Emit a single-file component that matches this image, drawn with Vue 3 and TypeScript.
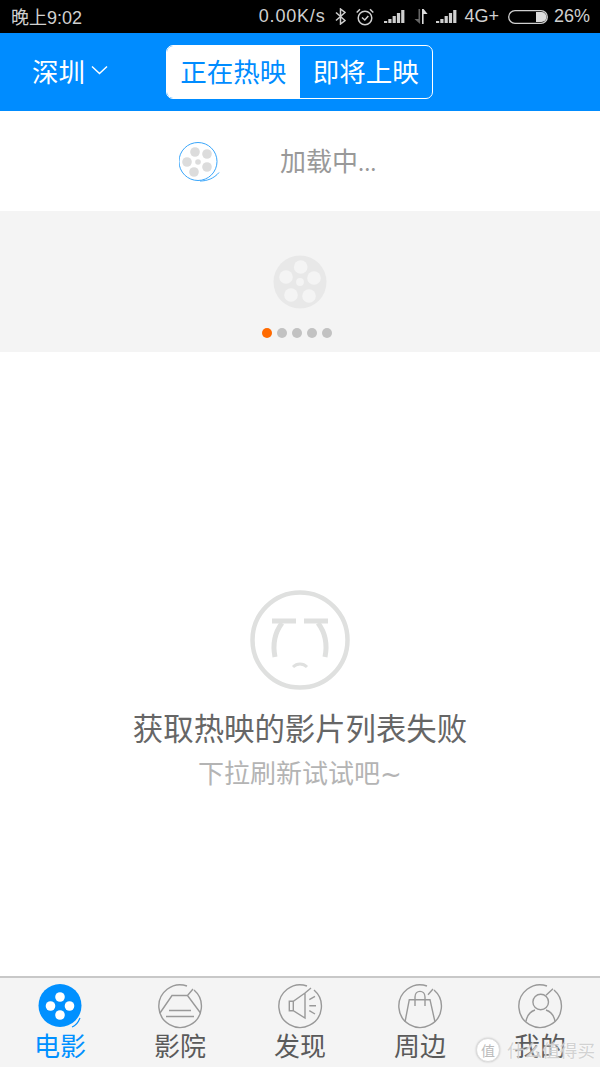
<script setup lang="ts">
const dots = [0, 1, 2, 3, 4]
const bars = [2, 4, 7, 10, 13]
const ring = "M29 2A21.3 21.3 0 1 0 36 6"
</script>

<template>
  <div class="page">
    <div class="status">
      <span class="time">晚上9:02</span>
      <div class="status-right">
        <span class="speed">0.00K/s</span>
        <svg class="bt" width="11" height="17" viewBox="0 0 11 17" fill="none" stroke="#d0d0d0" stroke-width="1.500">
          <path d="M1 4.500l9 8L5.500 16V1L10 4.500l-9 8" />
        </svg>
        <svg class="alarm" width="18" height="18" viewBox="0 0 18 18" fill="none" stroke="#d0d0d0" stroke-width="1.500">
          <circle cx="9" cy="10" r="6.800" />
          <path d="M6 9.500l2.800 2.500 3.500-4M.7 4.500L4 1.200M17.300 4.500L14 1.200" />
        </svg>
        <svg class="signal" width="21" height="13" viewBox="0 0 21 13">
          <rect v-for="(b, i) in bars" :key="i" :x="i * 4.3" :y="13 - b" width="3.200" :height="b" fill="#d0d0d0" />
        </svg>
        <svg class="data" width="14" height="17" viewBox="0 0 14 17">
          <path d="M4.500 1h1.600v15L.5 11h4z" fill="#666" />
          <path d="M8 1v15h1.600V6h4L9.600 1z" fill="#dcdcdc" />
        </svg>
        <svg class="signal2" width="21" height="13" viewBox="0 0 21 13">
          <rect v-for="(b, i) in bars" :key="i" :x="i * 4.3" :y="13 - b" width="3.200" :height="b" fill="#d0d0d0" />
        </svg>
        <span class="net">4G+</span>
        <svg class="battery" width="40" height="14" viewBox="0 0 40 14">
          <rect x="0.700" y="0.700" width="38.600" height="12.600" rx="6.300" fill="none" stroke="#d0d0d0" stroke-width="1.300" />
          <path d="M28 2h5.500a5 5 0 0 1 0 10H28z" fill="#dcdcdc" />
        </svg>
        <span class="pct">26%</span>
      </div>
    </div>

    <header class="nav">
      <div class="city">
        <span>深圳</span>
        <svg width="17" height="10" viewBox="0 0 17 10" fill="none" stroke="#fff" stroke-width="1.500">
          <path d="M1 1.500l7.500 7 7.500-7" />
        </svg>
      </div>
      <div class="segment">
        <div class="seg seg-on">正在热映</div>
        <div class="seg">即将上映</div>
      </div>
    </header>

    <div class="loading">
      <svg class="reel-small" width="42" height="42" viewBox="0 0 42 42" fill="none">
        <circle cx="19" cy="20.500" r="19" stroke="#3aa6fb" stroke-width="1" />
        <path d="M21 40c7 0 14-2.500 19-8.500" stroke="#3aa6fb" stroke-width="1" />
        <g fill="#dcdcdc">
          <circle cx="16" cy="11" r="4.800" />
          <circle cx="28" cy="13" r="4.800" />
          <circle cx="8" cy="21" r="4.800" />
          <circle cx="28" cy="26" r="4.800" />
          <circle cx="15" cy="31" r="4.800" />
          <circle cx="19" cy="21" r="2.800" />
        </g>
      </svg>
      <span class="loading-text">加载中<span class="ellipsis">...</span></span>
    </div>

    <div class="banner">
      <svg width="54" height="54" viewBox="0 0 54 54">
        <circle cx="27" cy="27" r="26.500" fill="#e8e8e8" />
        <g fill="#f4f4f4">
          <circle cx="27.700" cy="12" r="6.800" />
          <circle cx="41" cy="23" r="6.800" />
          <circle cx="13" cy="22" r="6.800" />
          <circle cx="36" cy="41" r="6.800" />
          <circle cx="18" cy="40" r="6.800" />
          <circle cx="27" cy="27" r="3.900" />
        </g>
      </svg>
      <div class="dots">
        <i v-for="d in dots" :key="d" class="dot" :class="{ 'dot-on': d === 0 }"></i>
      </div>
    </div>

    <main class="empty">
      <svg width="100" height="100" viewBox="0 0 100 100" fill="none" stroke="#dfe0df">
        <circle cx="50" cy="50" r="47.500" stroke-width="4.500" />
        <path d="M22 31h24M54 31h24" stroke-width="5" />
        <path d="M32 33c-9 12-9 24-7 34M68 33c9 12 9 24 7 34" stroke-width="5" />
        <path d="M43 77c4-4 10-4 14 0" stroke-width="3" />
      </svg>
      <h1 class="empty-title">获取热映的影片列表失败</h1>
      <p class="empty-sub">下拉刷新试试吧<span class="tilde">~</span></p>
    </main>

    <nav class="tabs">
      <div class="tab">
        <svg width="46" height="46" viewBox="0 0 46 46">
          <circle cx="22" cy="21.500" r="21.500" fill="#0090ff" />
          <path d="M34 43c3-1 6-4 8-9" fill="none" stroke="#0090ff" stroke-width="1.200" />
          <g fill="#fff">
            <circle cx="22" cy="13" r="4.800" />
            <circle cx="12.500" cy="22" r="4.800" />
            <circle cx="31.500" cy="22" r="4.800" />
            <circle cx="22" cy="31" r="4.800" />
          </g>
        </svg>
        <span class="tab-on">电影</span>
      </div>
      <div class="tab">
        <svg width="46" height="46" viewBox="0 0 46 46" fill="none" stroke="#999" stroke-width="1.400">
          <path :d="ring" />
          <path d="M2 29l12-17.500h15.500L42.500 29M29.500 11.500L35 5M11 26.500h22M8 32.500h28" />
        </svg>
        <span>影院</span>
      </div>
      <div class="tab">
        <svg width="46" height="46" viewBox="0 0 46 46" fill="none" stroke="#999" stroke-width="1.400">
          <path :d="ring" />
          <path d="M27 9v25l-11.700-7.300h-4V17.300h4zM15.300 17.300v9.400M27 9l6-5" />
          <path d="M31.300 15.700L37 12.300M31.300 21.700H38M31.300 26.700L37 30" />
        </svg>
        <span>发现</span>
      </div>
      <div class="tab">
        <svg width="46" height="46" viewBox="0 0 46 46" fill="none" stroke="#999" stroke-width="1.400">
          <path :d="ring" />
          <path d="M7 38l4.300-22.300H32L37 38" />
          <path d="M17 22V13c0-7.500 10-7.500 10 0v9M30 10.700L35 5" />
        </svg>
        <span>周边</span>
      </div>
      <div class="tab">
        <svg width="46" height="46" viewBox="0 0 46 46" fill="none" stroke="#999" stroke-width="1.400">
          <path :d="ring" />
          <circle cx="22.700" cy="18" r="7.800" />
          <path d="M8 37.500c1-6 4.500-10 9-11.500M37 37.500c-1-6-4.500-10-9-11.500M28 11.300L35 4.700" />
        </svg>
        <span>我的</span>
      </div>
    </nav>

    <div class="watermark">
      <span class="wm-badge">值</span>
      <span class="wm-text">什么值得买</span>
    </div>
  </div>
</template>

<style>
html,
body {
  margin: 0;
  background: #fff;
}
</style>

<style scoped>
.page {
  position: relative;
  display: flex;
  flex-direction: column;
  width: 600px;
  height: 1067px;
  overflow: hidden;
  background: #fff;
  font-family: "Noto Sans CJK SC", "Liberation Sans", sans-serif;
}
.status {
  display: flex;
  align-items: center;
  justify-content: space-between;
  flex: 0 0 33px;
  padding: 0 10px 0 11px;
  box-sizing: border-box;
  background: #000;
  color: #d0d0d0;
  font-family: "Liberation Sans", "Noto Sans CJK SC", sans-serif;
  font-size: 18px;
}
.time {
  margin-top: -2px;
}
.status-right {
  display: flex;
  align-items: center;
}
.speed {
  letter-spacing: 0.8px;
}
.bt {
  margin-left: 10px;
}
.alarm {
  margin-left: 10px;
}
.signal {
  margin-left: 10px;
}
.data {
  margin-left: 9px;
}
.signal2 {
  margin-left: 8px;
}
.net {
  margin-left: 7px;
}
.battery {
  margin-left: 9px;
}
.pct {
  margin-left: 6px;
}
.nav {
  display: flex;
  align-items: center;
  flex: 0 0 78px;
  padding-left: 32px;
  background: #008cff;
}
.city {
  display: flex;
  align-items: center;
  gap: 6px;
  width: 134px;
  margin-top: -4px;
  color: #fff;
  font-size: 26.500px;
}
.segment {
  display: flex;
  width: 267px;
  height: 54px;
  box-sizing: border-box;
  border: 1.500px solid #fff;
  border-radius: 7px;
  overflow: hidden;
  margin-top: -1px;
}
.seg {
  flex: 1;
  display: flex;
  align-items: center;
  justify-content: center;
  padding-bottom: 2px;
  box-sizing: border-box;
  color: #fff;
  font-size: 26.500px;
}
.seg-on {
  background: #fff;
  color: #008cff;
}
.loading {
  display: flex;
  align-items: center;
  flex: 0 0 100px;
  padding-left: 179px;
  box-sizing: border-box;
}
.reel-small {
  margin-top: 2px;
}
.loading-text {
  margin-left: 59px;
  margin-top: -4px;
  color: #999;
  font-size: 26px;
}
.ellipsis {
  font-size: 22px;
}
.banner {
  display: flex;
  flex-direction: column;
  align-items: center;
  flex: 0 0 141px;
  padding-top: 44px;
  box-sizing: border-box;
  background: #f4f4f4;
}
.dots {
  display: flex;
  gap: 5px;
  margin-top: 19px;
  padding-right: 6px;
}
.dot {
  width: 10px;
  height: 10px;
  border-radius: 50%;
  background: #c2c2c2;
}
.dot-on {
  background: #ff6a00;
}
.empty {
  flex: 1;
  display: flex;
  flex-direction: column;
  align-items: center;
  padding-top: 238px;
  box-sizing: border-box;
}
.empty-title {
  margin: 15px 0 0;
  color: #666;
  font-size: 30.400px;
  font-weight: 400;
  line-height: 44px;
}
.empty-sub {
  margin: 5px 0 0;
  color: #b4b4b4;
  font-size: 26px;
  line-height: 36px;
}
.tilde {
  font-family: "DejaVu Sans", sans-serif;
}
.tabs {
  display: flex;
  flex: 0 0 91px;
  box-sizing: border-box;
  border-top: 2px solid #c8c8c8;
  background: #f4f4f4;
}
.tab {
  flex: 1;
  display: flex;
  flex-direction: column;
  align-items: center;
  padding-top: 6px;
  color: #5a5a5a;
  font-size: 26px;
  line-height: 36px;
}
.tab svg {
  margin-left: 1px;
  margin-right: -1px;
  margin-bottom: -3px;
}
.tab-on {
  color: #0090ff;
}
.watermark {
  position: absolute;
  left: 476px;
  top: 1038px;
  display: flex;
  align-items: center;
  gap: 7px;
  color: rgba(205, 205, 205, 0.9);
  font-size: 17.600px;
  line-height: 24px;
  text-shadow: 0 0 2px #fff;
}
.wm-badge {
  width: 24px;
  height: 24px;
  box-sizing: border-box;
  border: 1px solid #ddd;
  border-radius: 50%;
  background: #fff;
  color: #bbb;
  font-size: 14px;
  line-height: 22px;
  text-align: center;
  box-shadow: 0 0 2px #bbb;
}
.wm-text {
  white-space: nowrap;
}
</style>
